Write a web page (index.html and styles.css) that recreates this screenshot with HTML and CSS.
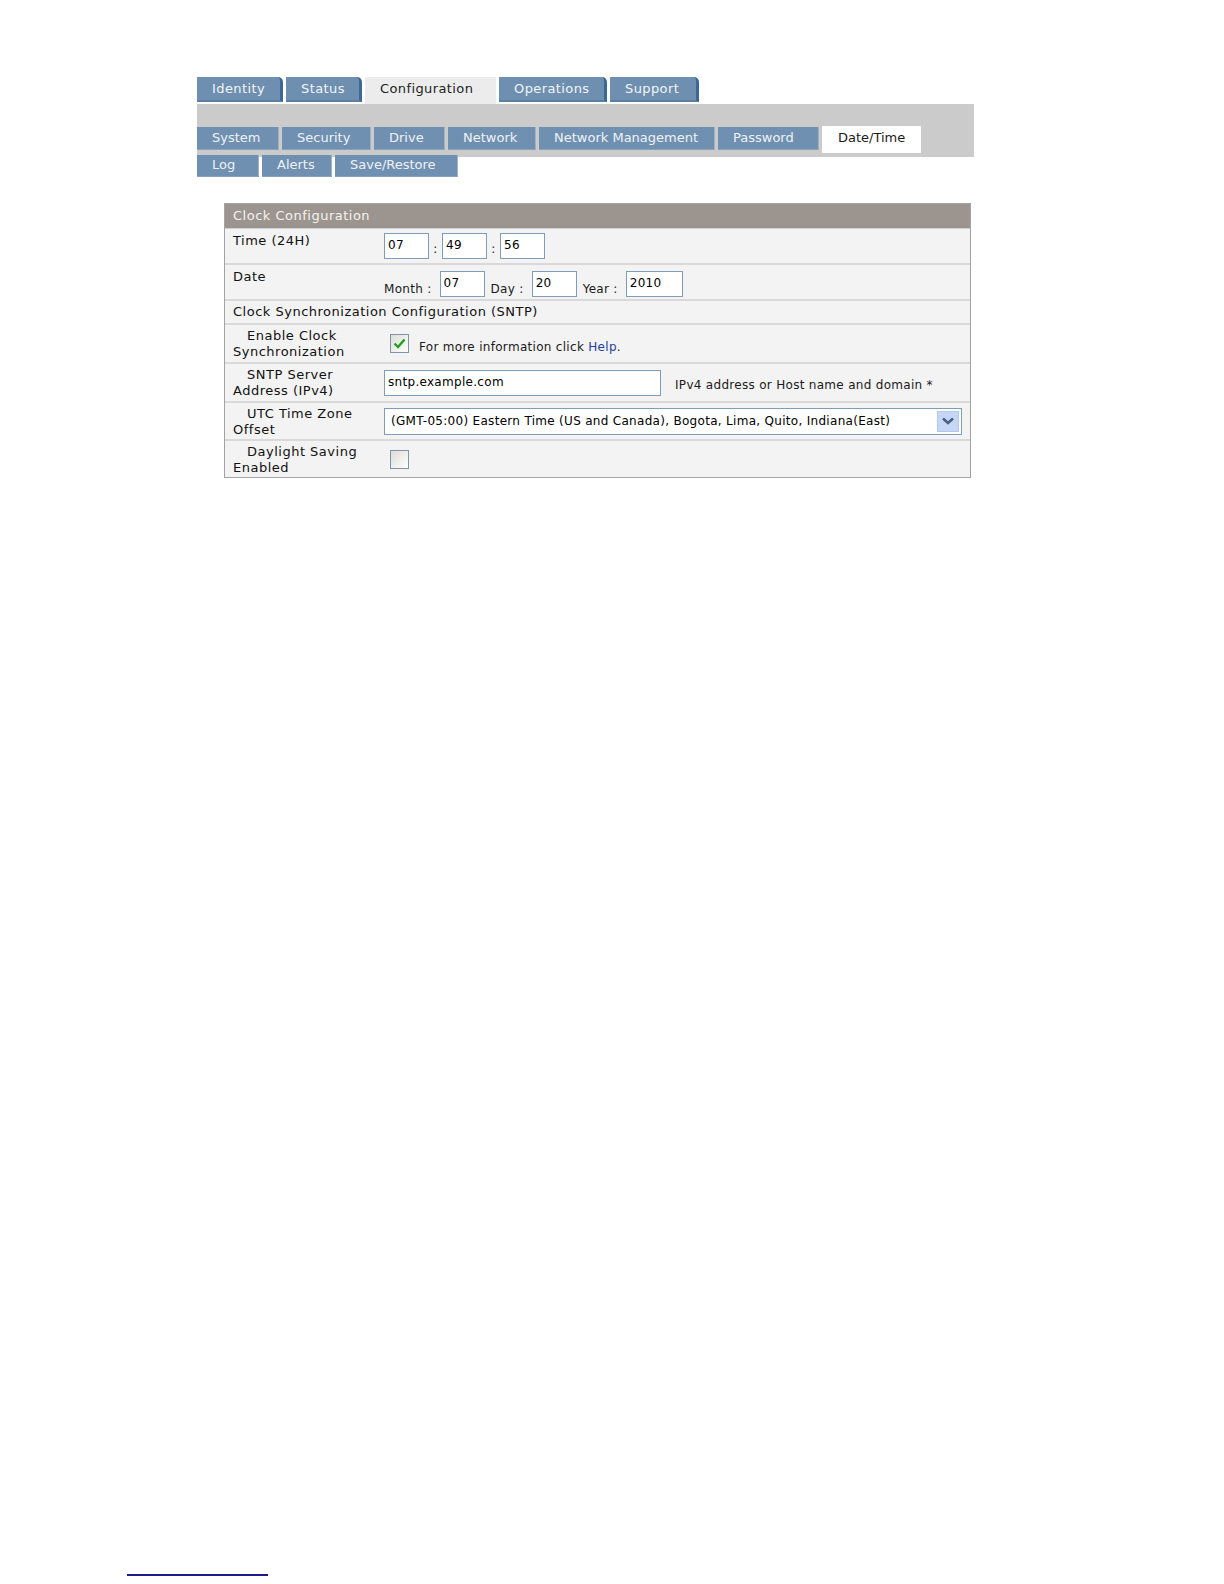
FILE: index.html
```html
<!DOCTYPE html>
<html>
<head>
<meta charset="utf-8">
<link rel="stylesheet" href="styles.css">
</head>
<body>
<div class="page">
  <div class="maintabs">
    <div class="mtab w-identity">Identity</div>
    <div class="mtab w-status">Status</div>
    <div class="mtab active w-config">Configuration</div>
    <div class="mtab w-ops">Operations</div>
    <div class="mtab w-support">Support</div>
  </div>
  <div class="band">
    <div class="subrow">
      <div class="stab w-system">System</div>
      <div class="stab w-security">Security</div>
      <div class="stab w-drive">Drive</div>
      <div class="stab w-network">Network</div>
      <div class="stab w-netmgmt">Network Management</div>
      <div class="stab w-password">Password</div>
      <div class="stab active w-datetime">Date/Time</div>
    </div>
    <div class="subrow second">
      <div class="stab w-log">Log</div>
      <div class="stab w-alerts">Alerts</div>
      <div class="stab w-save">Save/Restore</div>
    </div>
  </div>

  <div class="panel">
    <div class="phead">Clock Configuration</div>
    <div class="row r-time">
      <div class="label">Time (24H)</div>
      <div class="field mid">
        <span class="inp w-2">07</span><span class="sep">:</span><span class="inp w-2">49</span><span class="sep">:</span><span class="inp w-2">56</span>
      </div>
    </div>
    <div class="row r-date">
      <div class="label">Date</div>
      <div class="field low">
        <span class="flabel">Month :</span><span class="inp w-2">07</span>
        <span class="flabel">Day :</span><span class="inp w-2">20</span>
        <span class="flabel">Year :</span><span class="inp w-4">2010</span>
      </div>
    </div>
    <div class="row r-section">
      <div class="section">Clock Synchronization Configuration (SNTP)</div>
    </div>
    <div class="row r-tall">
      <div class="label two">Enable Clock Synchronization</div>
      <div class="field mid">
        <span class="cb">
          <svg width="19" height="19" viewBox="0 0 19 19"><defs><linearGradient id="g1" x1="0" y1="0" x2="1" y2="1"><stop offset="0" stop-color="#dcdcd6"/><stop offset="1" stop-color="#ffffff"/></linearGradient></defs><rect x="0.5" y="0.5" width="18" height="18" fill="url(#g1)" stroke="#7f93ab"/><path d="M4.5 9.5 L8 13 L14.5 5.5" fill="none" stroke="#21a121" stroke-width="2.4"/></svg>
        </span>
        <span class="info">For more information click <span class="link">Help</span>.</span>
      </div>
    </div>
    <div class="row r-tall">
      <div class="label two">SNTP Server Address (IPv4)</div>
      <div class="field mid">
        <span class="inp w-host">sntp.example.com</span>
        <span class="hint">IPv4 address or Host name and domain *</span>
      </div>
    </div>
    <div class="row r-utc">
      <div class="label two">UTC Time Zone Offset</div>
      <div class="field mid">
        <span class="select">
          <span class="seltext">(GMT-05:00) Eastern Time (US and Canada), Bogota, Lima, Quito, Indiana(East)</span>
          <span class="selbtn"><svg width="14" height="10" viewBox="0 0 14 10"><path d="M2 2.5 L7 7 L12 2.5" fill="none" stroke="#4d6185" stroke-width="2.6"/></svg></span>
        </span>
      </div>
    </div>
    <div class="row r-tall last">
      <div class="label two">Daylight Saving Enabled</div>
      <div class="field mid">
        <span class="cb">
          <svg width="19" height="19" viewBox="0 0 19 19"><defs><linearGradient id="g2" x1="0" y1="0" x2="1" y2="1"><stop offset="0" stop-color="#dcdcd6"/><stop offset="1" stop-color="#ffffff"/></linearGradient></defs><rect x="0.5" y="0.5" width="18" height="18" fill="url(#g2)" stroke="#7f93ab"/></svg>
        </span>
      </div>
    </div>
  </div>
  <div class="footrule"></div>
</div>
</body>
</html>
```

FILE: styles.css
```css
html, body {
  margin: 0;
  padding: 0;
  background: #ffffff;
}
html {
  overflow: hidden;
}
body {
  font-family: "DejaVu Sans", Verdana, sans-serif;
  font-size: 12px;
  color: #1a1a1a;
  height: 1584px;
}
.page {
  padding-top: 77px;
  padding-left: 197px;
  width: 777px;
}

/* main tabs */
.maintabs {
  display: flex;
  align-items: flex-start;
  gap: 3px;
  height: 27px;
}
.mtab {
  box-sizing: border-box;
  height: 25px;
  line-height: 23px;
  background: #6e8fb0;
  color: #f2f5f9;
  font-size: 13px;
  letter-spacing: 0.4px;
  padding-left: 15px;
  border-right: 3px solid #3d6893;
  border-bottom: 2px solid #5d7fa2;
  border-top-right-radius: 5px;
}
.mtab.active {
  height: 27px;
  background: #ececec;
  color: #222;
  border: none;
  border-radius: 0;
  line-height: 23px;
}
.w-identity { width: 86px; }
.w-status { width: 76px; }
.w-config { width: 131px; }
.w-ops { width: 108px; }
.w-support { width: 89px; }

/* band with subtabs */
.band {
  background: #cbcbcb;
  height: 53px;
  box-sizing: border-box;
  padding-top: 23px;
}
.subrow {
  display: flex;
  gap: 3px;
  align-items: flex-start;
}
.subrow.second {
  margin-top: 2px;
}
.stab {
  box-sizing: border-box;
  height: 23px;
  line-height: 21px;
  background: #7090b1;
  color: #eef2f7;
  font-size: 13px;
  padding-left: 15px;
  border-right: 1px solid #9fb3c8;
  border-bottom: 1px solid #8aa2bb;
}
.subrow.second .stab {
  height: 22px;
  line-height: 20px;
}
.stab.active {
  background: #ffffff;
  color: #1a1a1a;
  height: 27px;
  margin-top: -1px;
  line-height: 23px;
  padding-left: 16px;
  border: none;
}
.w-system { width: 82px; }
.w-security { width: 89px; }
.w-drive { width: 71px; }
.w-network { width: 88px; }
.w-netmgmt { width: 176px; }
.w-password { width: 101px; }
.w-datetime { width: 99px; }
.w-log { width: 62px; }
.w-alerts { width: 70px; }
.w-save { width: 123px; }

/* panel */
.panel {
  margin-top: 46px;
  margin-left: 27px;
  width: 747px;
  box-sizing: border-box;
  border: 1px solid #a3a3a3;
  background: #f3f3f3;
}
.phead {
  height: 24px;
  line-height: 24px;
  background: #9c958f;
  color: #f4f2f0;
  padding-left: 8px;
  font-size: 13px;
  letter-spacing: 0.5px;
}
.row {
  display: flex;
  border-top: 2px solid #d9d9d9;
  box-sizing: border-box;
}
.r-time { height: 35px; border-top: 1px solid #cfcfcf; }
.r-date { height: 36px; }
.r-section { height: 24px; }
.r-tall { height: 39px; }
.r-utc { height: 38px; }
.row.last { height: 38px; }

.label {
  box-sizing: border-box;
  width: 159px;
  padding-left: 8px;
  padding-right: 11px;
  padding-top: 4px;
  font-size: 13px;
  letter-spacing: 0.5px;
  line-height: 16px;
  color: #111;
  flex: none;
}
.label.two {
  text-indent: 14px;
  padding-top: 3px;
}
.section {
  padding-left: 8px;
  line-height: 22px;
  font-size: 13px;
  letter-spacing: 0.5px;
  color: #111;
}
.field {
  flex: 1;
  display: flex;
  font-family: "DejaVu Sans", Verdana, sans-serif;
  font-size: 12px;
  letter-spacing: 0.3px;
}
.field.mid {
  align-items: center;
}
.field.low {
  align-items: flex-end;
  padding-bottom: 2px;
}
.inp {
  box-sizing: border-box;
  height: 26px;
  line-height: 22px;
  border: 1px solid #7f9db9;
  background: #ffffff;
  padding-left: 3px;
  color: #000;
  display: inline-block;
}
.w-2 { width: 45px; }
.w-4 { width: 57px; }
.w-host { width: 277px; }
.sep {
  width: 13px;
  text-align: center;
  padding-top: 6px;
}
.flabel {
  padding: 0 8px 0 0;
  line-height: 16px;
}
.inp + .flabel {
  padding-left: 6px;
}
.cb {
  margin-left: 6px;
  width: 19px;
  height: 19px;
  display: inline-block;
}
.cb svg { display: block; }
.info {
  margin-left: 10px;
  padding-top: 6px;
}
.link {
  color: #1f3f9e;
}
.hint {
  margin-left: 14px;
  padding-top: 4px;
}
.select {
  box-sizing: border-box;
  width: 578px;
  height: 27px;
  border: 1px solid #7f9db9;
  background: #fff;
  display: flex;
  align-items: center;
  justify-content: space-between;
  padding: 2px 2px 2px 6px;
  color: #000;
}
.selbtn {
  width: 22px;
  height: 21px;
  background: #c6d6f5;
  border: 1px solid #b4c8ef;
  box-sizing: border-box;
  display: flex;
  align-items: center;
  justify-content: center;
}
.selbtn svg { display: block; }

.footrule {
  margin-top: 1096px;
  margin-left: -70px;
  width: 141px;
  height: 2px;
  background: #1b1b8c;
}
```
